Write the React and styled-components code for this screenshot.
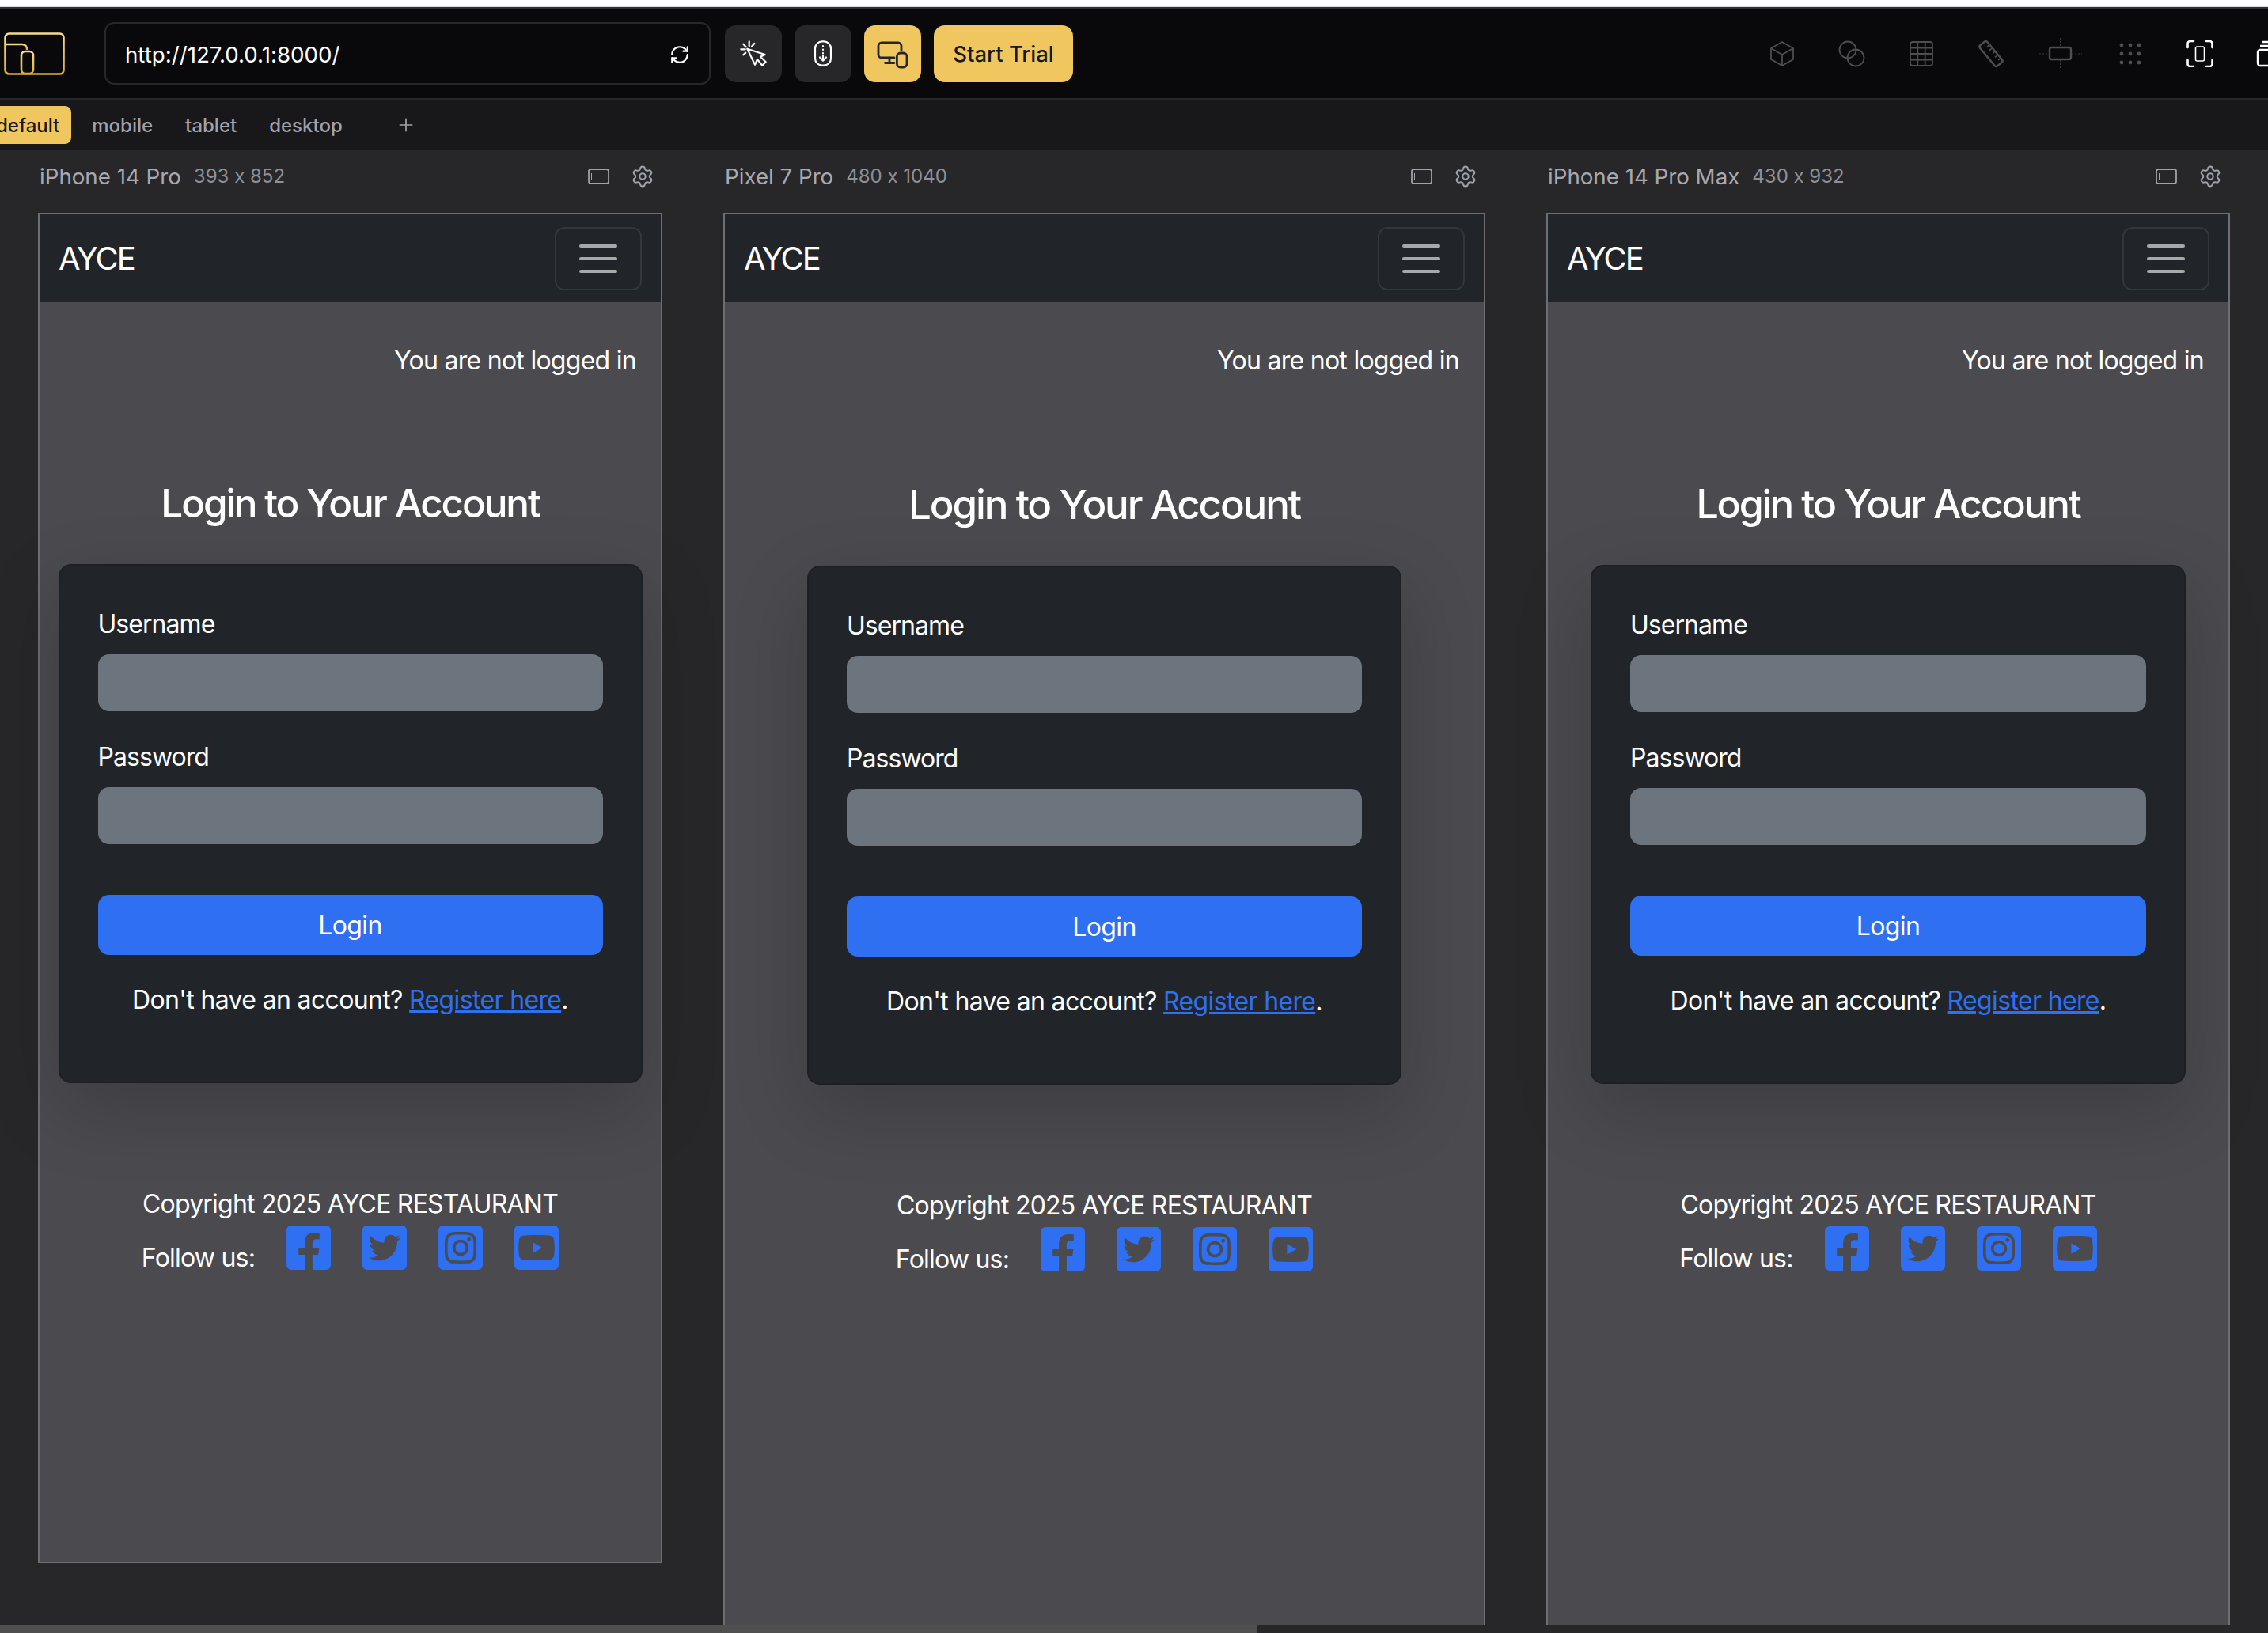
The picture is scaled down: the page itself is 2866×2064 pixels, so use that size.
import React from 'react';
import styled, { createGlobalStyle } from 'styled-components';
import { RefreshCw, Plus, Settings } from 'lucide-react';
import { FaFacebookSquare, FaTwitterSquare, FaInstagramSquare, FaYoutubeSquare } from 'react-icons/fa';

const GlobalStyle = createGlobalStyle`
  html, body { margin: 0; padding: 0; height: 100%; overflow: hidden; background: #27272a; }
  * { box-sizing: border-box; }
  body { font-family: Inter, "Noto Sans", sans-serif; font-feature-settings: "calt" 0; }
`;

const Page = styled.div`
  display: flex;
  flex-direction: column;
  height: 100vh;
  overflow: hidden;
`;

const TopStrip = styled.div`
  flex: none;
  height: 9px;
  background: #fff;
  border-bottom: 1px solid #dcdcdc;
`;

const Toolbar = styled.div`
  flex: none;
  display: flex;
  align-items: center;
  height: 117px;
  padding-left: 5px;
  background: #09090b;
  border-top: 2px solid #303033;
  border-bottom: 2px solid #27272a;
  overflow: hidden;
`;

const UrlBox = styled.div`
  flex: none;
  display: flex;
  align-items: center;
  justify-content: space-between;
  width: 766px;
  height: 79px;
  margin-left: 50px;
  margin-right: 18px;
  padding: 2px 24px 0 24px;
  color: #fff;
  font-size: 27.7px;
  border: 2px solid #27272a;
  border-radius: 12px;
`;

const IconButton = styled.div`
  flex: none;
  width: 72px;
  height: 72px;
  margin-right: 16px;
  border-radius: 14px;
  background: ${({ $active }) => ($active ? '#efc75e' : '#27272a')};
`;

const TrialButton = styled.div`
  flex: none;
  display: flex;
  align-items: center;
  justify-content: center;
  width: 176px;
  height: 72px;
  color: #18181b;
  font-size: 27.5px;
  font-weight: 500;
  background: #efc75e;
  border-radius: 14px;
`;

const ToolSlots = styled.div`
  flex: none;
  display: flex;
  margin-left: 852px;
`;

const ToolSlot = styled.div`
  flex: none;
  display: flex;
  align-items: center;
  justify-content: center;
  width: 88px;
  color: ${({ $on }) => ($on ? '#fff' : '#4e4e52')};
`;

const TabRow = styled.div`
  flex: none;
  display: flex;
  align-items: center;
  gap: 11px;
  height: 64px;
  background: #18181b;
  overflow: hidden;
`;

const Tab = styled.div`
  flex: none;
  height: 48px;
  line-height: 50px;
  padding: 0 15px;
  font-size: 24px;
  font-weight: 500;
  border-radius: 8px;
  color: ${({ $active }) => ($active ? '#18181b' : '#a1a1aa')};
  background: ${({ $active }) => ($active ? '#efc75e' : 'transparent')};
  margin-left: ${({ $active }) => ($active ? '-20px' : '0')};
`;

const AddTab = styled.div`
  display: flex;
  margin-left: 41px;
  color: #a1a1aa;
`;

const Stage = styled.div`
  flex: 1;
  min-height: 0;
  display: flex;
  align-items: flex-start;
  gap: 77px;
  padding-left: 48px;
  overflow: hidden;
  background: #27272a;
`;

const Column = styled.div`
  flex: none;
  width: ${({ $width }) => $width}px;
`;

const DeviceHeader = styled.div`
  display: flex;
  align-items: center;
  height: 79px;
  padding: 0 10px 14px 2px;
  color: #a1a1aa;
`;

const DeviceName = styled.span`
  font-size: 27.7px;
  color: #a8a8b0;
`;

const DeviceSize = styled.span`
  margin-left: 16px;
  font-size: 24px;
  color: #8f8f96;
`;

const HeaderIcons = styled.div`
  display: flex;
  align-items: center;
  gap: 27px;
  margin-left: auto;
`;

const Screen = styled.div`
  height: ${({ $height }) => $height}px;
  display: flex;
  flex-direction: column;
  color: #fff;
  font-size: 32px;
  line-height: 48px;
  background: #4a4a4f;
  border: 2px solid #6e6e72;
`;

const Navbar = styled.div`
  flex: none;
  display: flex;
  align-items: center;
  justify-content: space-between;
  height: 111px;
  padding: 0 24px;
  background: #212529;
`;

const Brand = styled.span`
  font-size: 40px;
  letter-spacing: -2px;
`;

const Toggler = styled.div`
  display: flex;
  flex-direction: column;
  align-items: center;
  justify-content: center;
  gap: 12px;
  width: 110px;
  height: 80px;
  border: 2px solid #33373c;
  border-radius: 12px;
`;

const TogglerBar = styled.span`
  width: 48px;
  height: 4px;
  border-radius: 2px;
  background: #a6a8a9;
`;

const Status = styled.div`
  padding: 50px 31px 0 0;
  text-align: right;
  letter-spacing: -0.72px;
`;

const Title = styled.h2`
  margin: 126.5px 0 47.5px;
  text-align: center;
  font-size: ${({ $viewport }) => 2 * (21.2 + 0.009 * $viewport)}px;
  line-height: 1.2;
  font-weight: 500;
  letter-spacing: -2.15px;
`;

const Card = styled.div`
  width: ${({ $width }) => $width}px;
  margin: 0 auto;
  padding: 48px 48px 79px;
  background: #212529;
  border: 2px solid #1c1f23;
  border-radius: 16px;
  box-shadow: 0 32px 96px rgba(0, 0, 0, 0.175);
`;

const FieldLabel = styled.div`
  padding-top: 2px;
  height: 48px;
  margin-bottom: 16px;
  letter-spacing: -0.95px;
`;

const FieldInput = styled.div`
  height: 72px;
  margin-bottom: 32px;
  background: #6c757d;
  border-radius: 14px;
`;

const LoginButton = styled.div`
  height: 76px;
  margin-top: 64px;
  line-height: 78px;
  text-align: center;
  background: #2f6ff2;
  border-radius: 14px;
  letter-spacing: -0.6px;
`;

const CardNote = styled.div`
  margin-top: 33px;
  text-align: center;
  letter-spacing: -0.65px;
`;

const NoteLink = styled.a`
  color: #2f6ff2;
  text-decoration: underline;
`;

const Footer = styled.div`
  margin-top: 129px;
  text-align: center;
  letter-spacing: -0.78px;
`;

const FollowRow = styled.div`
  display: flex;
  justify-content: center;
  align-items: flex-start;
  gap: 32px;
  margin-top: -1px;
  padding-left: 4px;
  color: #2f6ff2;
`;

const FollowLabel = styled.span`
  margin: 21px 4px 0 0;
  color: #fff;
`;

const Scrollbar = styled.div`
  flex: none;
  height: 10px;
  background: #27272a;
`;

const ScrollThumb = styled.div`
  width: 1589px;
  height: 100%;
  background: #4f4f50;
`;

const Logo = () => (
  <svg width="77" height="54" viewBox="0 0 77 54" fill="none" strokeWidth="2.6" style={{ flex: 'none' }}>
    <defs>
      <linearGradient id="logoGold" x1="0" y1="0" x2="0" y2="1">
        <stop offset="0" stopColor="#f6dc8a" />
        <stop offset="1" stopColor="#e2ab32" />
      </linearGradient>
    </defs>
    <rect x="1.5" y="1.5" width="74" height="51" rx="5" stroke="url(#logoGold)" />
    <path d="M3 15h20a6 6 0 0 1 6 7" stroke="url(#logoGold)" />
    <rect x="22" y="24" width="15" height="28" rx="5" stroke="url(#logoGold)" />
  </svg>
);

const PointerIcon = () => (
  <svg width="72" height="72" viewBox="0 0 72 72" fill="none" stroke="#fff" strokeWidth="2.2" strokeLinecap="round" strokeLinejoin="round">
    <path d="M28.3 29.7 38 49.7l3-6.7 6.3 7.7 4.4-4.4L45 39.7l5.7-2.7z" />
    <path d="M30.7 20.3v6M23.3 23.700l3.400 3.600M20.300 30.300h5.400M23.300 37.300l3-2.600M37.300 23 34 26.700" />
  </svg>
);

const ScrollIcon = () => (
  <svg width="72" height="72" viewBox="0 0 72 72" fill="none" stroke="#fff" strokeWidth="2.2" strokeLinecap="round" strokeLinejoin="round">
    <rect x="26" y="20.300" width="20" height="30.400" rx="9" />
    <path d="M36 26v.4M36 30.500v.4M36 35v.4M36 38.500v6M32 40.500l4 4.200 4-4.200" />
  </svg>
);

const DevicesIcon = () => (
  <svg width="72" height="72" viewBox="0 0 72 72" fill="none" stroke="#27272a" strokeWidth="2.8" strokeLinecap="round" strokeLinejoin="round">
    <path d="M47 32v-6a4 4 0 0 0-4-4H22a4 4 0 0 0-4 4v11a4 4 0 0 0 4 4h16" />
    <path d="M32 41v6M26.500 47.500H38" />
    <rect x="41.400" y="35" width="12.600" height="18" rx="4.500" />
  </svg>
);

const CubeIcon = () => (
  <svg width="32" height="34" viewBox="0 0 32 34" fill="none" stroke="currentColor" strokeWidth="1.8" strokeLinejoin="round">
    <path d="M16 2 30 10v14l-14 8-14-8V10zM2 10l14 8 14-8M16 18v14" />
  </svg>
);

const CirclesIcon = () => (
  <svg width="34" height="34" viewBox="0 0 34 34" fill="none" stroke="currentColor" strokeWidth="1.8">
    <circle cx="12" cy="12" r="10.500" />
    <circle cx="22" cy="22" r="10.500" />
  </svg>
);

const GridIcon = () => (
  <svg width="30" height="32" viewBox="0 0 30 32" fill="none" stroke="currentColor" strokeWidth="1.8">
    <rect x="1" y="1" width="28" height="30" rx="3" />
    <path d="M10.300 1v30M19.700 1v30M1 8.500h28M1 16h28M1 23.500h28" />
  </svg>
);

const RulerIcon = () => (
  <svg width="36" height="36" viewBox="0 0 36 36" fill="none" stroke="currentColor" strokeWidth="2.4" strokeLinejoin="round">
    <g transform="rotate(50 18 18)">
      <rect x="1" y="12" width="34" height="12" rx="2.500" />
      <path d="M8 12v4M13.500 12v5M19 12v4M24.500 12v5M30 12v4" strokeWidth="1.600" />
    </g>
  </svg>
);

const SpacingIcon = () => (
  <svg width="54" height="40" viewBox="0 0 54 40" fill="none" stroke="currentColor">
    <rect x="13" y="12" width="27" height="15" rx="2.500" strokeWidth="2.400" />
    <path d="M0 20h12M41 20h13M26.500 0v11M26.500 28v12" strokeWidth="1" strokeDasharray="2 2" opacity="0.7" />
  </svg>
);

const DotsIcon = () => (
  <svg width="28" height="28" viewBox="0 0 28 28" fill="currentColor">
    {[3, 14, 25].flatMap((y) => [3, 14, 25].map((x) => <circle key={`${x}-${y}`} cx={x} cy={y} r="2.400" />))}
  </svg>
);

const FocusIcon = () => (
  <svg width="34" height="34" viewBox="0 0 34 34" fill="none" stroke="currentColor" strokeLinecap="round">
    <path d="M1.500 9V4a3 3 0 0 1 3-3H9M25 1h4.500a3 3 0 0 1 3 3v5M32.500 25v5a3 3 0 0 1-3 3H25M9 33H4.500a3 3 0 0 1-3-3v-5" strokeWidth="2.600" />
    <rect x="11.500" y="8" width="11" height="18" rx="2" strokeWidth="1.600" />
  </svg>
);

const StackIcon = () => (
  <svg width="34" height="34" viewBox="0 0 34 34" fill="none" stroke="currentColor" strokeWidth="2.400">
    <path d="M8 2h18M5 7h24" />
    <rect x="2" y="12" width="30" height="20" rx="3" />
  </svg>
);

const ScreenIcon = () => (
  <svg width="27" height="20" viewBox="0 0 27 20" fill="none" stroke="currentColor" style={{ flex: 'none' }}>
    <rect x="1" y="1" width="25" height="18" rx="2.500" strokeWidth="1.800" />
    <path d="M4.500 6v8" strokeWidth="1" />
  </svg>
);

const toolIcons = [
  [CubeIcon, false],
  [CirclesIcon, false],
  [GridIcon, false],
  [RulerIcon, false],
  [SpacingIcon, false],
  [DotsIcon, false],
  [FocusIcon, true],
  [StackIcon, true],
];

const devices = [
  { name: 'iPhone 14 Pro', size: '393 x 852', viewport: 393, width: 789, height: 1707, card: 738 },
  { name: 'Pixel 7 Pro', size: '480 x 1040', viewport: 480, width: 963, height: 2083, card: 751 },
  { name: 'iPhone 14 Pro Max', size: '430 x 932', viewport: 430, width: 864, height: 1867, card: 752 },
];

const DeviceScreen = ({ device }) => (
  <Column $width={device.width}>
    <DeviceHeader>
      <DeviceName>{device.name}</DeviceName>
      <DeviceSize>{device.size}</DeviceSize>
      <HeaderIcons>
        <ScreenIcon />
        <Settings size={30} strokeWidth={1.6} />
      </HeaderIcons>
    </DeviceHeader>
    <Screen $height={device.height}>
      <Navbar>
        <Brand>AYCE</Brand>
        <Toggler>
          <TogglerBar />
          <TogglerBar />
          <TogglerBar />
        </Toggler>
      </Navbar>
      <Status>You are not logged in</Status>
      <Title $viewport={device.viewport}>Login to Your Account</Title>
      <Card $width={device.card}>
        <FieldLabel>Username</FieldLabel>
        <FieldInput />
        <FieldLabel>Password</FieldLabel>
        <FieldInput />
        <LoginButton>Login</LoginButton>
        <CardNote>
          Don't have an account? <NoteLink>Register here</NoteLink>.
        </CardNote>
      </Card>
      <Footer>
        Copyright 2025 AYCE RESTAURANT
        <FollowRow>
          <FollowLabel>Follow us:</FollowLabel>
          <FaFacebookSquare size={64} />
          <FaTwitterSquare size={64} />
          <FaInstagramSquare size={64} />
          <FaYoutubeSquare size={64} />
        </FollowRow>
      </Footer>
    </Screen>
  </Column>
);

export default function App() {
  return (
    <Page>
      <GlobalStyle />
      <TopStrip />
      <Toolbar>
        <Logo />
        <UrlBox>
          <span>http://127.0.0.1:8000/</span>
          <RefreshCw size={26} strokeWidth={2} />
        </UrlBox>
        <IconButton><PointerIcon /></IconButton>
        <IconButton><ScrollIcon /></IconButton>
        <IconButton $active><DevicesIcon /></IconButton>
        <TrialButton>Start Trial</TrialButton>
        <ToolSlots>
          {toolIcons.map(([Icon, on], i) => (
            <ToolSlot key={i} $on={on}><Icon /></ToolSlot>
          ))}
        </ToolSlots>
      </Toolbar>
      <TabRow>
        <Tab $active>default</Tab>
        <Tab>mobile</Tab>
        <Tab>tablet</Tab>
        <Tab>desktop</Tab>
        <AddTab><Plus size={26} strokeWidth={1.6} /></AddTab>
      </TabRow>
      <Stage>
        {devices.map((device) => (
          <DeviceScreen key={device.name} device={device} />
        ))}
      </Stage>
      <Scrollbar>
        <ScrollThumb />
      </Scrollbar>
    </Page>
  );
}
